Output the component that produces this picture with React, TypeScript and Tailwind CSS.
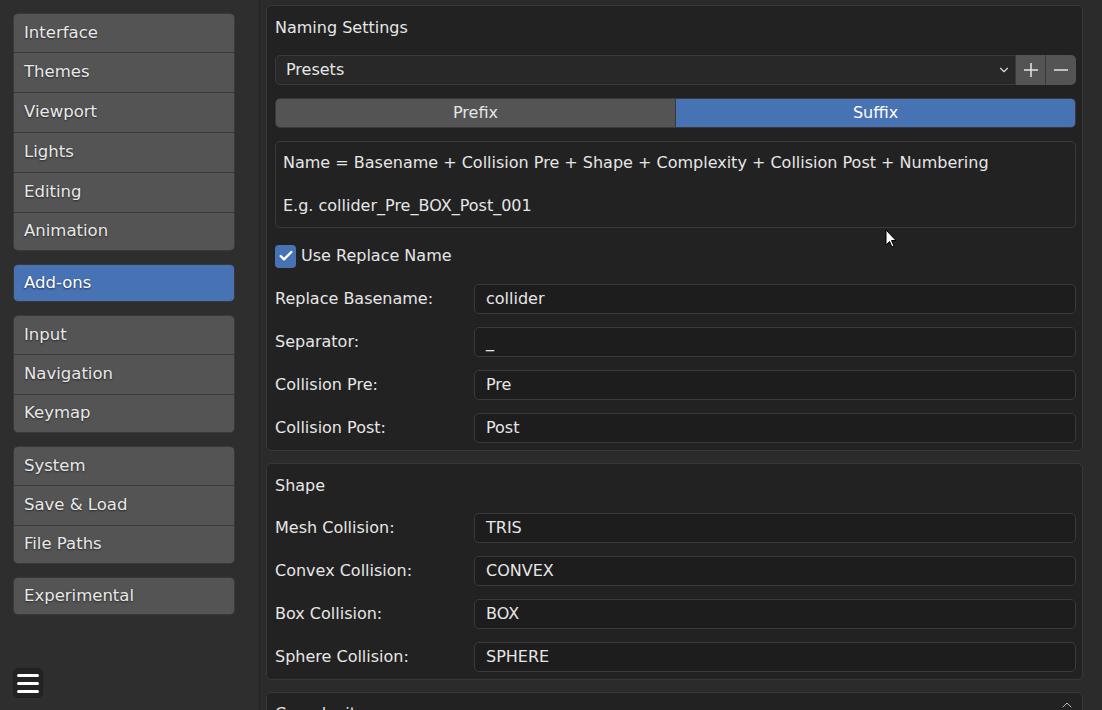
import { Check, ChevronDown, ChevronUp } from "lucide-react";

const groups = [
  ["Interface", "Themes", "Viewport", "Lights", "Editing", "Animation"],
  ["Add-ons"],
  ["Input", "Navigation", "Keymap"],
  ["System", "Save & Load", "File Paths"],
  ["Experimental"],
];

const shadow = "[text-shadow:0_1px_2px_rgba(0,0,0,0.55)]";

function Field({ label, value }: { label: string; value: string }) {
  return (
    <div className="flex items-center h-[30px]">
      <div className="w-[199px] shrink-0">{label}</div>
      <div className="flex-1 h-full flex items-center rounded-[5px] border border-[#3a3a3a] bg-[#1d1d1d] pl-[11px]">
        {value}
      </div>
    </div>
  );
}

function Panel({ title, children }: { title: string; children?: React.ReactNode }) {
  return (
    <div className="rounded-[5px] border border-[#383838] bg-[#222222] pl-[8px] pr-[6px] pb-[7px]">
      <div className="h-[42px] flex items-center pt-[2px]">{title}</div>
      <div className="mt-[7px] flex flex-col gap-[13px]">{children}</div>
    </div>
  );
}

export default function App() {
  return (
    <div className="w-[1102px] h-[710px] overflow-hidden flex bg-[#2b2b2b] text-[16px] text-[#e6e6e6] font-['DejaVu_Sans',sans-serif] leading-none relative">
      {/* Sidebar */}
      <div className="w-[260px] shrink-0 h-full bg-[#2e2e2e] border-r border-[#242424] flex flex-col pt-[13px] pl-[13px] pr-[24px]">
        <div className="flex flex-col gap-[13px]">
          {groups.map((g, gi) => (
            <div
              key={gi}
              className={`rounded-[5px] border border-[#3a3a3a] overflow-hidden ${shadow}`}
            >
              {g.map((item, i) => {
                const single = g.length === 1;
                const h = single ? "h-[36px]" : i === 0 || i === g.length - 1 ? "h-[38px]" : "h-[40px]";
                return (
                  <div
                    key={item}
                    className={`${h} flex items-center pl-[10px] text-[16.5px] ${
                      item === "Add-ons" ? "bg-[#4772b3] text-white" : "bg-[#545454] text-[#e8e8e8]"
                    } ${i > 0 ? "border-t border-[#3a3a3a]" : ""}`}
                  >
                    {item}
                  </div>
                );
              })}
            </div>
          ))}
        </div>
        <div className="mt-auto mb-[12px] w-[30px] h-[30px] rounded-[5px] bg-[#232323] border border-[#1f1f1f] flex flex-col items-center justify-center gap-[5px]">
          <div className="w-[22px] h-[3px] rounded-full bg-white" />
          <div className="w-[22px] h-[3px] rounded-full bg-white" />
          <div className="w-[22px] h-[3px] rounded-full bg-white" />
        </div>
      </div>

      {/* Main */}
      <div className="flex-1 pl-[6px] pr-[19px] pt-[5px] flex flex-col gap-[12px]">
        <Panel title="Naming Settings">
          <div className="flex h-[30px]">
            <div className="flex-1 flex items-center justify-between rounded-l-[5px] border border-[#3a3a3a] bg-[#282828] pl-[10px] pr-[4px]">
              <span>Presets</span>
              <ChevronDown size={14} strokeWidth={2} className="text-[#d8d8d8]" />
            </div>
            <div className="w-[30px] flex items-center justify-center bg-[#545454] border-r border-[#3a3a3a]">
              <svg width="16" height="16" viewBox="0 0 16 16"><path d="M8 1v14M1 8h14" stroke="#e5e5e5" strokeWidth="1.5" /></svg>
            </div>
            <div className="w-[30px] flex items-center justify-center bg-[#545454] rounded-r-[5px]">
              <svg width="16" height="16" viewBox="0 0 16 16"><path d="M1 8h14" stroke="#e5e5e5" strokeWidth="1.5" /></svg>
            </div>
          </div>
          <div className="flex h-[30px] rounded-[5px] overflow-hidden border border-[#3a3a3a]">
            <div className="flex-1 bg-[#545454] flex items-center justify-center border-r border-[#3a3a3a]">Prefix</div>
            <div className="flex-1 bg-[#4772b3] flex items-center justify-center text-white">Suffix</div>
          </div>
          <div className="h-[87px] rounded-[5px] border border-[#3a3a3a] pl-[7px] flex flex-col justify-center gap-[27px]">
            <div>Name = Basename + Collision Pre + Shape + Complexity + Collision Post + Numbering</div>
            <div>E.g. collider_Pre_BOX_Post_001</div>
          </div>
          <div className="h-[30px] flex items-center gap-[5px]">
            <div className="w-[21px] h-[23px] rounded-[4px] bg-[#4772b3] flex items-center justify-center">
              <Check size={16} strokeWidth={3.5} className="text-white" />
            </div>
            <span>Use Replace Name</span>
          </div>
          <Field label="Replace Basename:" value="collider" />
          <Field label="Separator:" value="_" />
          <Field label="Collision Pre:" value="Pre" />
          <Field label="Collision Post:" value="Post" />
        </Panel>

        <Panel title="Shape">
          <Field label="Mesh Collision:" value="TRIS" />
          <Field label="Convex Collision:" value="CONVEX" />
          <Field label="Box Collision:" value="BOX" />
          <Field label="Sphere Collision:" value="SPHERE" />
        </Panel>

        <div className="rounded-[5px] border border-[#383838] bg-[#222222] pl-[8px] pr-[6px] h-[60px] flex items-start justify-between">
          <div className="pt-[13px]">Complexity</div>
          <div className="pt-[4px] pr-[1px]">
            <ChevronUp size={16} strokeWidth={1.5} className="text-[#bdbdbd]" />
          </div>
        </div>
      </div>

      {/* Mouse pointer */}
      <svg className="absolute left-[885px] top-[229px]" width="13" height="20" viewBox="0 0 13 20">
        <path d="M1 1 L1 16 L4.5 12.5 L7 18 L9 17 L6.5 11.5 L11 11.5 Z" fill="#fff" stroke="#000" strokeWidth="1" />
      </svg>
    </div>
  );
}
